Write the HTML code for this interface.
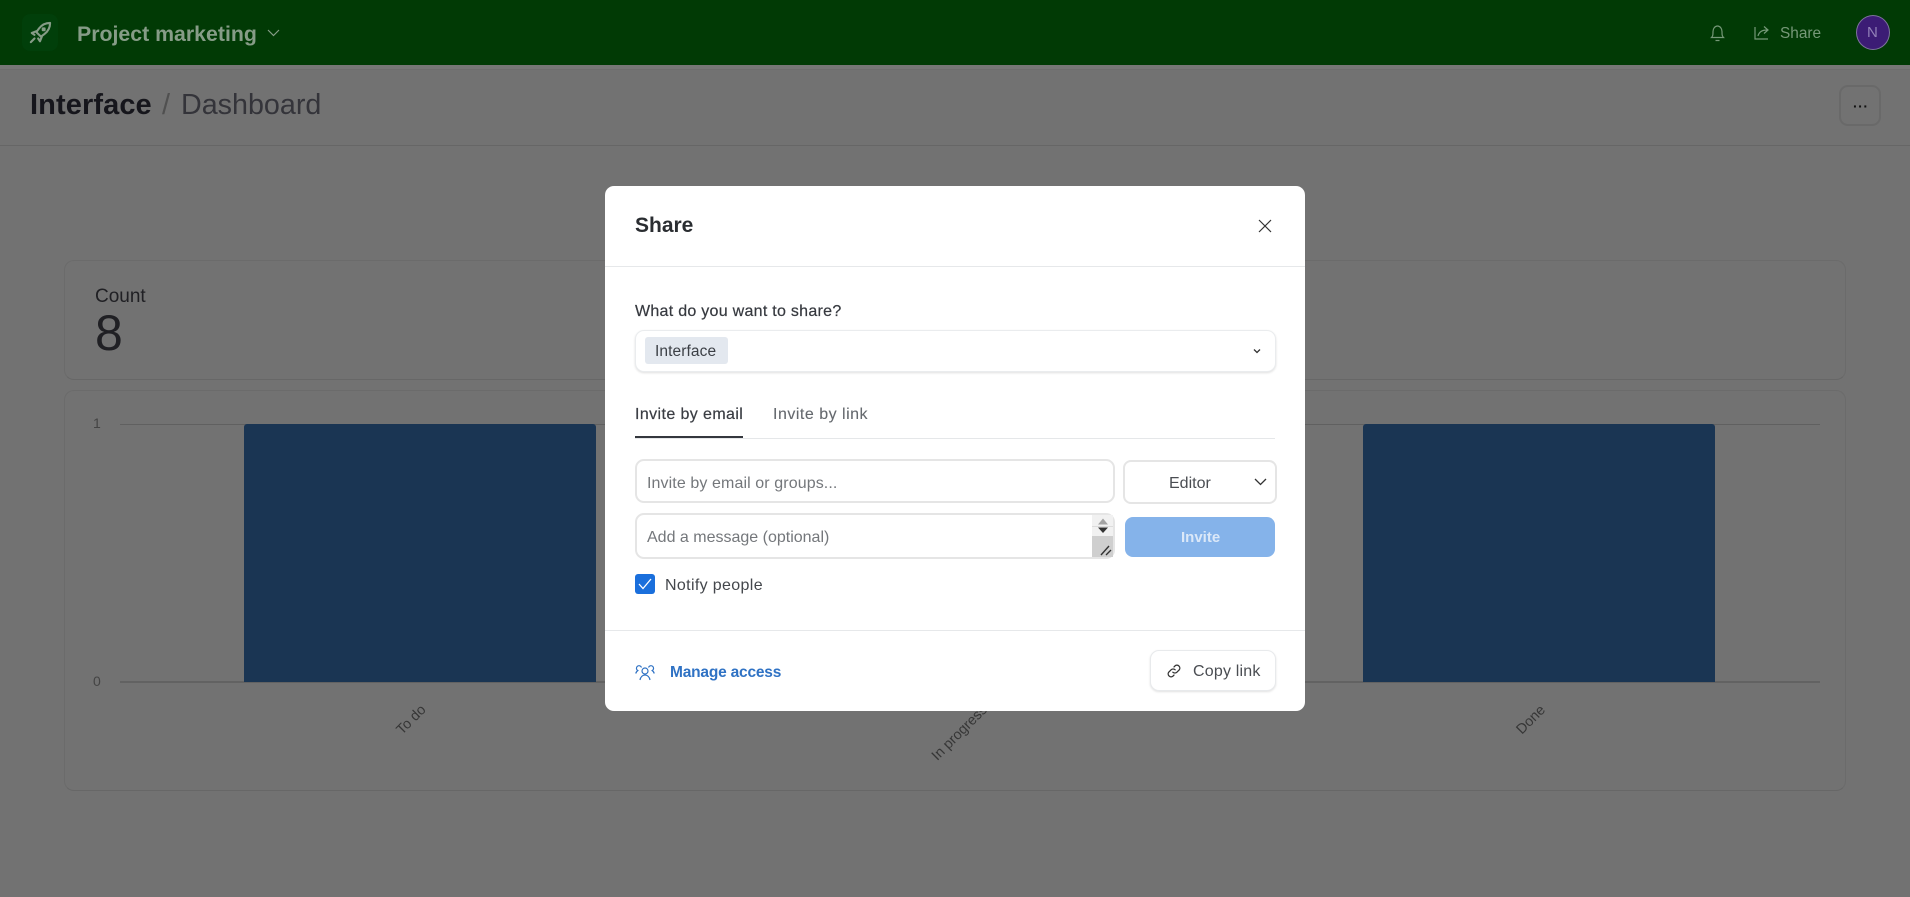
<!DOCTYPE html>
<html lang="en"><head><meta charset="utf-8"><title>Share</title>
<style>
html,body{margin:0;padding:0;width:1910px;height:897px;overflow:hidden;background:#727272;font-family:"Liberation Sans",Arial,sans-serif}
.a{position:absolute}
.t{position:absolute;white-space:nowrap;line-height:20px}
svg{position:absolute;overflow:visible}
</style></head><body>
<div class="a" style="left:0;top:0;width:1910px;height:65px;background:#013a05"></div>
<div class="a" style="left:0;top:65px;width:1910px;height:5px;background:#767676;border-bottom:1px solid #6d6d6d;box-sizing:border-box"></div>
<div class="a" style="left:22px;top:14px;width:36px;height:37px;border-radius:8px;background:#013f0a"></div>
<svg style="left:29px;top:22px" width="22" height="22" viewBox="0 0 24 24" fill="none" stroke="#869c87" stroke-width="2.300" stroke-linejoin="round" stroke-linecap="round"><path d="M23 1c-5 0-9 2-12 6l-3 4 5 5 4-3c4-3 6-7 6-12z"/><path d="M8 10l-5 2 3 2M14 16l-2 5-2-3M6 18l-4 4M15 7h2v2h-2z"/></svg>
<div class="t" style="left:77px;top:24px;font-size:21.300px;font-weight:700;color:#869c87">Project marketing</div>
<svg style="left:267px;top:29px" width="13" height="8" viewBox="0 0 13 8" fill="none" stroke="#869c87" stroke-width="1.200"><path d="M1 1l5.500 5.500L12 1"/></svg>
<svg style="left:1710px;top:25px" width="15" height="17" viewBox="0 0 15 17" fill="none" stroke="#769878" stroke-width="1.200"><path d="M1.500 12.500c1.500-1.500 1.500-3 1.500-6C3 3.500 5 1 7.500 1S12 3.500 12 6.500c0 3 0 4.500 1.500 6zM5.500 15.500h4"/></svg>
<svg style="left:1754px;top:25px" width="16" height="15" viewBox="0 0 16 15" fill="none" stroke="#769878" stroke-width="1.200"><path d="M1 2v12h13M4 11c1-4 4-6 9-6M10 1.500L14 5l-4 3.500"/></svg>
<div class="t" style="left:1780px;top:24px;font-size:15.400px;color:#769878">Share</div>
<div class="a" style="left:1856px;top:15px;width:32px;height:33px;border-radius:50%;background:#3c1c75;border:1px solid #7d729c"></div>
<div class="t" style="left:1867px;top:23px;font-size:15px;color:#9280b8">N</div>

<div class="t" style="left:30px;top:90px;line-height:30px;font-size:29px;letter-spacing:.1px;font-weight:700;color:#16161c">Interface</div>
<div class="t" style="left:162px;top:90px;line-height:30px;font-size:29px;color:#505050">/</div>
<div class="t" style="left:181px;top:90px;line-height:30px;font-size:28.700px;color:#34343a">Dashboard</div>
<div class="a" style="left:1839px;top:85px;width:42px;height:41px;box-sizing:border-box;border:2px solid #696969;border-radius:9px"></div>
<div class="t" style="left:1853px;top:99px;font-size:14px;font-weight:700;color:#111;letter-spacing:.5px;line-height:14px">···</div>
<div class="a" style="left:0;top:145px;width:1910px;height:1px;background:#666"></div>

<div class="a" style="left:64px;top:260px;width:1782px;height:120px;box-sizing:border-box;border:1px solid #6b6b6b;border-bottom:1px solid #676767;border-radius:10px"></div>
<div class="a" style="left:64px;top:390px;width:1782px;height:401px;box-sizing:border-box;border:1px solid #6b6b6b;border-bottom:1px solid #676767;border-radius:10px"></div>
<div class="t" style="left:95px;top:287px;font-size:19px;color:#202024">Count</div>
<div class="t" style="left:95px;top:308px;line-height:50px;font-size:50px;color:#202024">8</div>
<div class="t" style="left:93px;top:413px;font-size:14px;color:#444">1</div>
<div class="t" style="left:93px;top:671px;font-size:14px;color:#444">0</div>
<div class="a" style="left:120px;top:424px;width:1700px;height:1px;background:#606060"></div>
<div class="a" style="left:120px;top:681px;width:1700px;height:2px;background:#626262"></div>
<div class="a" style="left:243.500px;top:423.500px;width:352px;height:258px;background:#1a3553;border-radius:3px 3px 0 0"></div>
<div class="a" style="left:803.500px;top:423.500px;width:352px;height:258px;background:#1a3553;border-radius:3px 3px 0 0"></div>
<div class="a" style="left:1362.500px;top:423.500px;width:352px;height:258px;background:#1a3553;border-radius:3px 3px 0 0"></div>
<div class="t" style="left:394px;top:710px;font-size:14.300px;color:#363636;transform:rotate(-45deg)">To do</div>
<div class="t" style="left:924px;top:723px;font-size:14.300px;color:#363636;transform:rotate(-45deg)">In progress</div>
<div class="t" style="left:1514px;top:710px;font-size:14.300px;color:#363636;transform:rotate(-45deg)">Done</div>

<!-- modal -->
<div class="a" style="left:605px;top:186px;width:700px;height:525px;background:#fff;border-radius:9px"></div>
<div class="t" style="left:635px;top:216px;font-size:21px;font-weight:700;color:#2a2d31">Share</div>
<svg style="left:1258px;top:219px" width="14" height="14" viewBox="0 0 14 14" fill="none" stroke="#333" stroke-width="1.200"><path d="M1 1l12 12M13 1L1 13"/></svg>
<div class="a" style="left:605px;top:266px;width:700px;height:1px;background:#e6e8ea"></div>
<div class="t" style="left:635px;top:302px;font-size:16px;letter-spacing:.28px;color:#36393f;-webkit-text-stroke:.2px #36393f">What do you want to share?</div>
<div class="a" style="left:635px;top:330px;width:641px;height:42px;box-sizing:border-box;border:1px solid #eaecee;border-radius:9px;box-shadow:0 1px 2px rgba(0,0,0,.13);background:#fff"></div>
<div class="a" style="left:645px;top:337px;width:83px;height:27px;background:#e3e8ef;border-radius:3px"></div>
<div class="t" style="left:655px;top:342px;font-size:15.500px;letter-spacing:.1px;color:#3c4046">Interface</div>
<svg style="left:1252px;top:348px" width="10" height="7" viewBox="0 0 10 7" fill="none" stroke="#333" stroke-width="1.300"><path d="M2 1.500L5 4.500l3-3"/></svg>
<div class="t" style="left:635px;top:405px;font-size:16px;letter-spacing:.4px;color:#3a3d43;-webkit-text-stroke:.2px #3a3d43">Invite by email</div>
<div class="t" style="left:773px;top:405px;font-size:16px;letter-spacing:.5px;color:#65696e;-webkit-text-stroke:.1px #65696e">Invite by link</div>
<div class="a" style="left:635px;top:437.500px;width:640px;height:1px;background:#e5e7e9"></div>
<div class="a" style="left:635px;top:436px;width:108px;height:2px;background:#34373d"></div>

<div class="a" style="left:635px;top:459px;width:480px;height:44px;box-sizing:border-box;border:2px solid #e5e5e5;border-radius:9px;background:#fff"></div>
<div class="t" style="left:647px;top:474px;font-size:16px;letter-spacing:.1px;color:#74777b">Invite by email or groups...</div>
<div class="a" style="left:1123px;top:460px;width:154px;height:44px;box-sizing:border-box;border:2px solid #e5e5e5;border-radius:8px;background:#fff"></div>
<div class="t" style="left:1169px;top:474px;font-size:16px;color:#4a4d52">Editor</div>
<svg style="left:1254px;top:478px" width="13" height="8" viewBox="0 0 13 8" fill="none" stroke="#333" stroke-width="1.300"><path d="M1 1l5.500 5.500L12 1"/></svg>

<div class="a" style="left:635px;top:513px;width:480px;height:46px;box-sizing:border-box;border:2px solid #e5e5e5;border-radius:9px;background:#fff"></div>
<div class="a" style="left:1092px;top:515px;width:21px;height:42px;background:#f1f1f1"></div>
<div class="a" style="left:1092px;top:536px;width:21px;height:21px;background:#cfcfcf"></div>
<div class="a" style="left:1092px;top:526px;width:21px;height:1px;background:#dcdcdc"></div>
<svg style="left:1097px;top:517px" width="12" height="18" viewBox="0 0 12 18"><path d="M1 7.500L6 1.500l5 6z" fill="#a3a3a3"/><path d="M1 10.500h10L6 16z" fill="#333"/></svg>
<svg style="left:1100px;top:544px" width="12" height="12" viewBox="0 0 12 12" fill="none" stroke="#333" stroke-width="1.400"><path d="M1 11L9 2M6 11l5-5"/></svg>
<div class="t" style="left:647px;top:528px;font-size:16px;color:#74777b">Add a message (optional)</div>
<div class="a" style="left:1125px;top:517px;width:150px;height:40px;background:#85b3ea;border-radius:8px"></div>
<div class="t" style="left:1181px;top:528px;font-size:15px;font-weight:700;color:#dbe8f8">Invite</div>
<div class="a" style="left:635px;top:574px;width:20px;height:20px;background:#1a6fdc;border-radius:3px"></div>
<svg style="left:638px;top:578px" width="14" height="12" viewBox="0 0 14 12" fill="none" stroke="#fff" stroke-width="1.300"><path d="M1 6l4 4.500L13 1"/></svg>
<div class="t" style="left:665px;top:576px;font-size:16px;letter-spacing:.35px;color:#44474c">Notify people</div>
<div class="a" style="left:605px;top:630px;width:700px;height:1px;background:#e6e8ea"></div>
<svg style="left:635px;top:663px" width="20" height="18" viewBox="0 0 20 18" fill="none" stroke="#2f72c4" stroke-width="1.200"><circle cx="10" cy="8" r="3"/><path d="M5 17c.4-3 2.600-5 5-5s4.600 2 5 5"/><path d="M6.500 4.500A2.600 2.600 0 1 0 2.800 7.600C1.800 8.200 1 9.300.8 10.500M13.500 4.500a2.600 2.600 0 1 1 3.700 3.100c1 .6 1.800 1.700 2 2.900"/></svg>
<div class="t" style="left:670px;top:663px;font-size:15.500px;letter-spacing:-.2px;font-weight:700;color:#2f72c4">Manage access</div>
<div class="a" style="left:1150px;top:650px;width:126px;height:41px;box-sizing:border-box;border:1px solid #e8eaec;border-radius:9px;box-shadow:0 1px 2px rgba(0,0,0,.12);background:#fff"></div>
<svg style="left:1167px;top:664px" width="14" height="14" viewBox="0 0 24 24" fill="none" stroke="#333" stroke-width="2.200" stroke-linecap="round"><path d="M10 14a5 5 0 0 0 7 0l4-4a5 5 0 0 0-7-7l-2 2"/><path d="M14 10a5 5 0 0 0-7 0l-4 4a5 5 0 0 0 7 7l2-2"/></svg>
<div class="t" style="left:1193px;top:662px;font-size:16px;letter-spacing:.2px;color:#4a4d52">Copy link</div>
</body></html>
